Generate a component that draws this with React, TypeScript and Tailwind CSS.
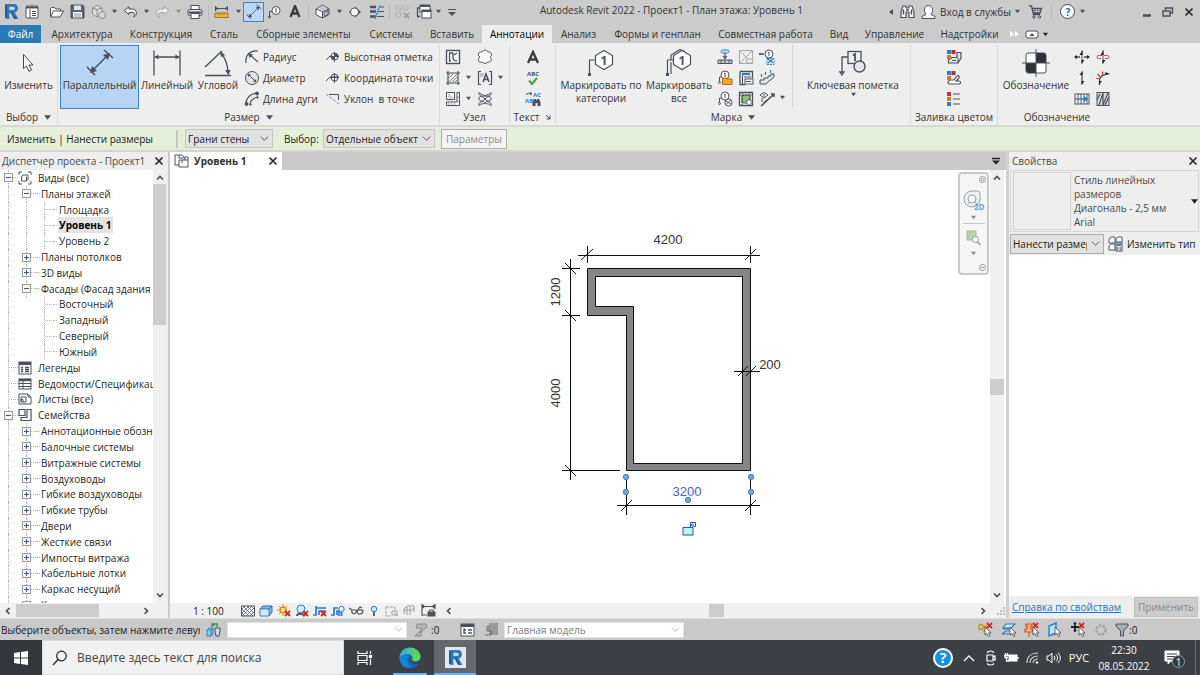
import { useState } from 'react';
import type { ReactNode } from 'react';

const INK = '#4a515c';
const BLUE = '#2b7cc9';

// ---------- small building blocks ----------

const Svg = ({
  w = 16,
  h = 16,
  children,
}: {
  w?: number;
  h?: number;
  children: ReactNode;
}) => (
  <svg
    width={w}
    height={h}
    viewBox={`0 0 ${w} ${h}`}
    fill="none"
    stroke={INK}
    strokeWidth="1"
    className="shrink-0"
    aria-hidden="true"
  >
    {children}
  </svg>
);

const Caret = ({ color = INK, size = 5 }: { color?: string; size?: number }) => (
  <svg width={size} height={size} viewBox="0 0 6 6" className="shrink-0" aria-hidden="true">
    <path d="M0 1h6L3 5z" fill={color} />
  </svg>
);

const Chevron = ({ className = '' }: { className?: string }) => (
  <svg
    width="9"
    height="9"
    viewBox="0 0 10 10"
    fill="none"
    stroke="#555"
    strokeWidth="1.1"
    className={`shrink-0 ${className}`}
    aria-hidden="true"
  >
    <path d="M1 3l4 4 4-4" />
  </svg>
);

const BoldChevron = ({ className = '' }: { className?: string }) => (
  <svg
    width="8"
    height="8"
    viewBox="0 0 8 8"
    fill="none"
    stroke="#505050"
    strokeWidth="1.7"
    className={`shrink-0 ${className}`}
    aria-hidden="true"
  >
    <path d="M1 2.500l3 3 3-3" />
  </svg>
);

const Cross = () => (
  <Svg w={10} h={10}>
    <path d="M1.500 1.500l7 7M8.500 1.500l-7 7" stroke="#2a2a2a" strokeWidth="1.7" />
  </Svg>
);

const Tool = ({
  label,
  className = 'w-[21px]',
  children,
}: {
  label: string;
  className?: string;
  children: ReactNode;
}) => (
  <button aria-label={label} className={`flex shrink-0 items-center justify-center ${className}`}>
    {children}
  </button>
);

const Divider = () => <span className="h-4 w-px shrink-0 bg-[#b9b9b9]" />;

const Select = ({
  label,
  value,
  className,
  chevron = '',
}: {
  label: string;
  value: string;
  className: string;
  chevron?: string;
}) => (
  <div className={`relative flex shrink-0 items-center border pr-4 ${className}`}>
    <select
      aria-label={label}
      className="h-full w-full appearance-none overflow-hidden bg-transparent pl-[2px] text-clip outline-none"
    >
      <option>{value}</option>
    </select>
    <Chevron className={`pointer-events-none absolute right-[3px] ${chevron}`} />
  </div>
);

// ---------- icons ----------

const RevitLogo = ({ size = 16 }: { size?: number }) => (
  <svg width={size} height={size} viewBox="0 0 16 16" className="shrink-0" aria-hidden="true">
    <path d="M2 1l3 1v13l-3-1z" fill="#174a86" />
    <path d="M2 1h8c3 0 4 2 4 4s-1 3.500-3 4l3.500 6h-4L7.500 9.500H6V15H3.500V1z" fill="#2f78bd" />
    <path d="M6 3.500h3.500c2 0 2 3.200 0 3.200H6z" fill="#c9d9ea" />
    <path d="M6 9.500h1.500l3 5.500h1.700L8.500 8.200z" fill="#1d5797" />
  </svg>
);

const Badge = ({ x, y, r = 4 }: { x: number; y: number; r?: number }) => (
  <g>
    <circle cx={x} cy={y} r={r} fill="#fff" />
    <path d={`M${x - 1} ${y - 1}l1-1v4`} />
  </g>
);

const RedX = ({ x, y }: { x: number; y: number }) => (
  <path d={`M${x} ${y}l5 5M${x + 5} ${y}l-5 5`} stroke="#cf2a1e" strokeWidth="1.8" />
);

const Pointer = ({ x, y }: { x: number; y: number }) => (
  <path
    d={`M${x} ${y}v8l2-1.500 1.500 3 1.500-.8-1.500-2.700h2.500z`}
    fill="#fff"
    stroke="#444"
    strokeWidth=".8"
  />
);

const IconWindow = () => (
  <Svg w={14} h={14}>
    <rect x="1" y="1" width="12" height="12" rx="1" fill="#fff" />
    <path d="M1 2.500h12" strokeWidth="2" />
    <path d="M5 4v9M7 6.500h4M7 8.500h4M7 10.500h4" />
  </Svg>
);
const IconOpen = () => (
  <Svg w={16} h={14}>
    <path d="M1.500 12V3.500l1-1h3l1.500 1.500h4.500V6" fill="#f4f4f4" />
    <path d="M1.500 12l3-6h10l-3.500 6z" fill="#fff" />
  </Svg>
);
const IconSave = () => (
  <Svg w={15} h={15}>
    <path d="M1 1h11.500L14 2.500V14H1z" fill="#59626e" />
    <rect x="4" y="1.500" width="7" height="4.500" fill="#dfe3e8" stroke="none" />
    <rect x="3" y="8" width="9" height="5.500" fill="#fff" stroke="none" />
    <path d="M4 10h7M4 12h7" strokeWidth=".7" />
  </Svg>
);
const IconSync = () => (
  <Svg>
    <path d="M1.500 4L6 1.500 11 4v6L6 13l-4.500-3zM1.500 4L6 6l5-2M6 6v7" fill="#e0e0e0" stroke="#8e8e8e" />
    <circle cx="11" cy="11" r="3.500" fill="#d6d6d6" stroke="#8e8e8e" />
  </Svg>
);
const IconUndo = ({ color = INK, flip = false }: { color?: string; flip?: boolean }) => (
  <Svg w={15} h={12}>
    <path
      d="M1 4.500L6 .8v2.200h3.500c5 0 5 7.500 1 8 2-2.500 1-4.500-1.500-4.500H6v2z"
      fill="#f1f1f1"
      stroke={color}
      transform={flip ? 'matrix(-1 0 0 1 15 0)' : undefined}
    />
  </Svg>
);
const IconPrint = () => (
  <Svg>
    <rect x="4" y="1.500" width="8" height="5" fill="#fff" />
    <rect x="1" y="5.500" width="14" height="6" rx="1.500" fill="#d9dce0" />
    <path d="M2 8.500h12" strokeWidth="2" />
    <rect x="4" y="9.500" width="8" height="5" fill="#fff" />
  </Svg>
);
const IconMeasure = () => (
  <Svg w={15} h={14}>
    <path d="M1 3.500h13M1.500 1v5M13.500 1v5M3.500 2L2 3.500 3.500 5M11.500 2L13 3.500 11.500 5" />
    <rect x="1" y="8" width="13" height="4.500" fill="#f3b43c" stroke="#a87415" />
    <path d="M4 8v2M7 8v2M10 8v2" stroke="#a87415" />
  </Svg>
);
const IconDim = ({ s = 16 }: { s?: number }) => (
  <svg width={s} height={s} viewBox="0 0 28 28" fill="none" stroke={INK} strokeWidth="1.500" aria-hidden="true">
    <path d="M5 23L23 5M1 18l8 8M18 1l9 8" />
    <path d="M4 24l2-7 5 5zM24 4l-2 7-5-5z" fill={INK} stroke="none" />
  </svg>
);
const IconTagSmall = () => (
  <Svg w={15} h={14}>
    <path d="M2.500 12V6.500H5" />
    <circle cx="2.500" cy="12" r="1" />
    <Badge x={9} y={5.5} r={4} />
  </Svg>
);
const IconCube = () => (
  <Svg w={15} h={15}>
    <path d="M1 5l6.500-4L14 5v5.500L7.500 14 1 10.500z" fill="#fff" />
    <path d="M1 5l6.500 2.500L14 5M7.500 7.500V14" />
    <path d="M9 8l4-1.500v4L9 12.500z" fill="#c3c8ce" />
    <path d="M2.500 4.500l5-3 5 3-5 2z" fill="#c3c8ce" stroke="none" />
  </Svg>
);
const IconSection = () => (
  <Svg w={14} h={14}>
    <path d="M7 1.500L13 7l-6 5.500z" fill={INK} stroke="none" />
    <circle cx="6.500" cy="7" r="4" fill="#fff" />
    <path d="M1 7h1.500" />
  </Svg>
);
const IconThin = () => (
  <Svg>
    <path d="M1 3h6M1 7.500h6M1 12.500h6" strokeWidth="2.600" />
    <path d="M10 3h5M9 7.500h6M8 12.500h7" />
    <path d="M11 1L6 15" stroke="#3a96e0" strokeWidth="1.300" />
  </Svg>
);
const IconCloseHidden = () => (
  <Svg w={15} h={15}>
    <path d="M1 2h5v4H1zM8 2h5v4H8zM1 9h5v4H1z" stroke="#aaa" strokeDasharray="2 1" />
    <path d="M9 9l5 5M14 9l-5 5" stroke="#999" strokeWidth="1.600" />
  </Svg>
);
const IconSwitch = () => (
  <Svg w={16} h={15}>
    <rect x="4" y="1" width="10" height="7" fill="#fff" />
    <path d="M4 2h10" strokeWidth="2" />
    <rect x="6" y="6" width="9" height="8" fill="#fff" />
    <path d="M6 7h9" strokeWidth="2" />
    <path d="M1.500 4v8.500H4M1 4h3" strokeWidth="1.300" />
  </Svg>
);
const IconBinoculars = () => (
  <Svg w={15} h={15}>
    <path d="M3 2h3v2h3V2h3l2 6v5.500h-5V8H6v5.500H1V8z" fill="#fff" strokeWidth="1.200" />
    <path d="M3.500 5.500v5M11.500 5.500v5M6 6h3" strokeWidth="1.500" />
  </Svg>
);
const IconUser = () => (
  <Svg w={15} h={16}>
    <path d="M1 14.500v-2l4-2c-2.500-3-2-9 2.500-9s5 6 2.500 9l4 2v2z" fill="#fff" />
  </Svg>
);
const IconCart = () => (
  <Svg w={15} h={15}>
    <path d="M1 2h2.500l2 8.500H12M4 4.500h9.500L12 9H5" fill="#e8eaee" strokeWidth="1.300" />
    <path d="M7 5v4M9.500 5v4M12 5v3M4 6.500h9" strokeWidth=".6" />
    <circle cx="6" cy="13" r="1.200" />
    <circle cx="11.500" cy="13" r="1.200" />
  </Svg>
);

const IconCursor = () => (
  <Svg w={14} h={20}>
    <path d="M1.500 1.500v14l3-2.500 2.500 5.500 2.500-1.500-2.500-5h4z" fill="#fff" stroke="#444" />
  </Svg>
);
const IconLinear = () => (
  <Svg w={28} h={28}>
    <path d="M1 1.500v25M27 1.500v25M2 8h24" strokeWidth="1.300" />
    <path d="M1.500 8l4-2.500v5zM26.500 8l-4-2.500v5z" fill={INK} stroke="none" />
  </Svg>
);
const IconAngular = () => (
  <Svg w={28} h={28}>
    <path d="M1 18L18 2M1 26.500h26M17 4c5 6 7 14 7 21" strokeWidth="1.300" />
    <path d="M16 2l5 4-4 2zM24.500 26l-3.500-5h5.500z" fill={INK} stroke="none" />
  </Svg>
);
const IconRadius = () => (
  <Svg>
    <path d="M2 14C1 6 6 1 14 2M14 13L6 6" strokeWidth="1.200" />
    <path d="M4 4l5 1.500L5.500 9z" fill={INK} stroke="none" />
  </Svg>
);
const IconDiameter = () => (
  <Svg>
    <circle cx="8" cy="8" r="6.500" fill="#e2e4e6" />
    <path d="M4 4l8 8" />
    <path d="M3.500 3.500l3.500 1L4.500 7zM12.500 12.500l-3.500-1L11.500 9z" fill={INK} stroke="none" />
  </Svg>
);
const IconArc = () => (
  <Svg>
    <path d="M2 13C2 7 6 3 13 2M6 14c0-4 3-7 8-8" strokeWidth="1.200" />
    <circle cx="2.500" cy="13" r="1.500" fill={INK} />
    <circle cx="13" cy="2.500" r="1.500" fill={INK} />
    <circle cx="6.500" cy="13.500" r=".8" />
    <circle cx="13.500" cy="6.500" r=".8" />
  </Svg>
);
const IconSpot = ({ filled = false }: { filled?: boolean }) => (
  <Svg>
    <path d="M1 11l4-4h9M9.500 3v10" />
    <circle cx="9.500" cy="7.500" r="3.500" fill={filled ? '#fff' : 'none'} />
    {filled && <path d="M9.500 7.500V4a3.500 3.500 0 013.500 3.500zM9.500 7.500V11A3.500 3.500 0 016 7.500z" fill={INK} stroke="none" />}
    <path d="M5 7.500h9M9.500 3v10" />
  </Svg>
);
const IconSlope = () => (
  <Svg>
    <path d="M4 3.500h9.500V9" />
    <path d="M1 3l13 10" stroke="#4a93d8" strokeDasharray="3 1.500" />
  </Svg>
);

const IconDetailLine = () => (
  <Svg>
    <rect x="1.500" y="1.500" width="13" height="13" fill="#fff" strokeWidth="1.400" />
    <path d="M4 4h4M4.500 4v8M4 12h2M8 4v4c0 3 2 4 4 4M12 4L9 6" strokeWidth="1.300" />
  </Svg>
);
const IconRegion = () => (
  <Svg>
    <path d="M1 3h14M1 13h14M3 1v14M13 1v14" strokeWidth="1.200" />
    <path d="M4 8l4-4M4 12l8-8M7 12l5-5M10 12l2-2M4 5l1-1" strokeWidth=".7" />
  </Svg>
);
const IconComponent = () => (
  <Svg>
    <path d="M1.500 1.500h8v7h-8zM12 1.500h2.500v13h-13V11H12z" fill="#fff" />
    <path d="M3 3l5 4M3 12l1 2M6 12l1 2M9 12l1 2M12 5l2 2M12 9l2 2M3 5l3 3" strokeWidth=".6" />
  </Svg>
);
const IconCloud = () => (
  <Svg>
    <path
      d="M3 8C0 7 1 2 5 3c1-2.500 5-2.500 6 0 4-.5 4.500 4 2 5 2.500 2 1 6-2.500 5-1 2-4 2-5 0C1.500 14.500 0 10 3 8z"
      fill="#fff"
    />
  </Svg>
);
const IconGroup = () => (
  <Svg>
    <path d="M4 1.500H1.500v13H4M12 1.500h2.500v13H12" strokeWidth="1.200" />
    <path d="M6 12l3-8 3 8M7 9.500h4" strokeWidth="1.500" />
    <path d="M3 4h4M3 6h3" strokeWidth=".6" />
  </Svg>
);
const IconInsulation = () => (
  <Svg>
    <path d="M2 1.500c1 2.500 4 1.500 6 3.500 2-2 5-1 6-3.500M2 1.500C1 5 5 4.500 8 8c3-3.500 7-3 6-6.500M2 8c-1-3 4-3 6-3 2 0 7 0 6 3M2 8c0 3 4 1 6 4 2-3 6-1 6-4M2 14.500c-1-4 4-3.500 6-6.500 2 3 7 2.500 6 6.500M2 14.500c2-2.500 4-1 6-2.500 2 1.500 4 0 6 2.500" />
  </Svg>
);
const IconSpell = () => (
  <svg width="16" height="16" viewBox="0 0 16 16" aria-hidden="true">
    <text x="8" y="6" textAnchor="middle" fontSize="6" fontWeight="700" fill={INK} fontFamily="Open Sans, sans-serif">
      ABC
    </text>
    <path d="M4 10.500l3 3.500 5-6" fill="none" stroke="#3aa63a" strokeWidth="2" />
  </svg>
);
const IconFind = () => (
  <svg width="16" height="16" viewBox="0 0 16 16" aria-hidden="true">
    <path d="M1 4c1-2 3-2 5-1.500M5 1l2 1.800L5 4" fill="none" stroke={INK} />
    <text x="8" y="6" fontSize="6" fontWeight="700" fill={BLUE} fontFamily="Open Sans, sans-serif">
      AC
    </text>
    <text x="0" y="12" fontSize="6" fontWeight="700" fill={BLUE} fontFamily="Open Sans, sans-serif">
      AB
    </text>
    <path d="M9 8h2v1h1V8h2l1.500 3v4h-3v-3h-2v3H7.500v-4z" fill={INK} />
  </svg>
);

const Hexagon = ({ double = false }: { double?: boolean }) => (
  <svg width="28" height="28" viewBox="0 0 28 28" fill="none" stroke={INK} strokeWidth="1.200" aria-hidden="true">
    <path d="M9 11H2.500v13" />
    <path d="M1 24h3v3H1z" fill={INK} stroke="none" />
    {double && <path d="M6 13v12M6 11V6l9-5.500 5 2" />}
    <path d="M17 1.500l8.500 5v9L17 20.500 8.500 15.500v-9z" fill="#fff" />
    <text
      x="17"
      y="15.500"
      textAnchor="middle"
      fontSize="12"
      fontWeight="700"
      fill={INK}
      stroke="none"
      fontFamily="Open Sans, sans-serif"
    >
      1
    </text>
  </svg>
);

const tagIcons: { name: string; icon: ReactNode }[] = [
  {
    name: 'Марка балки',
    icon: (
      <Svg>
        <rect x="4" y="1" width="8" height="3" rx="1.500" fill="#cfe6fb" stroke={BLUE} />
        <path d="M8 4v5M6 7l2 2.500L10 7" strokeWidth="1.200" />
        <path d="M1 11h14v3.500H1z" fill="#c8ccd0" />
        <path d="M4 11v3M8 11v3M12 11v3" />
      </Svg>
    ),
  },
  {
    name: 'Марка зоны',
    icon: (
      <Svg>
        <path d="M1.500 1.500h13v13h-13zM1.500 1.500l13 13M14.500 1.500l-13 13" stroke="#a9a9a9" />
        <rect x="8" y="10" width="7" height="4" rx="2" fill="#eee" stroke="#a9a9a9" />
      </Svg>
    ),
  },
  {
    name: 'Многокатегорийная',
    icon: (
      <Svg>
        <path d="M0 5h5M1 4v2" strokeWidth="1.300" />
        <Badge x={10} y={5} r={4} />
        <path d="M8 9.500h7v6H8z" stroke={BLUE} strokeDasharray="2 1" />
        <path d="M9 10l5 4M14 10l-5 4" stroke={BLUE} strokeWidth="1.300" />
      </Svg>
    ),
  },
  {
    name: 'Марка материала',
    icon: (
      <Svg>
        <path d="M2.500 12V7H4" />
        <circle cx="2.500" cy="12.500" r="1" />
        <Badge x={8} y={5} r={4} />
        <path d="M5.500 8h3l1 1h5.500v5.500H5.500z" fill="#f3a62b" stroke="#a86c0c" />
      </Svg>
    ),
  },
  {
    name: 'Марка помещения',
    icon: (
      <Svg>
        <path d="M2 1.500h12.500V8M2 1.500v13h5" strokeWidth="1.300" />
        <path d="M4 3h8v2H4z" fill={BLUE} stroke="none" />
        <path d="M4.500 5v9" />
        <rect x="7" y="9" width="8" height="5" fill="#fff" />
        <path d="M6 7h7M8 11.500h5" />
      </Svg>
    ),
  },
  {
    name: 'Номер проступи',
    icon: (
      <Svg>
        <path d="M1 14v-4h4V8h4V6h3V4h3v3l-2 2-3 2-3 3z" fill="#e4e7ea" />
        <path d="M2.500 7V4M6.500 5V2M11.500 3V0" stroke={BLUE} strokeWidth="1.200" />
      </Svg>
    ),
  },
  {
    name: 'Марка вида',
    icon: (
      <Svg>
        <path d="M2.500 12V7H4" />
        <circle cx="2.500" cy="12.500" r="1" />
        <Badge x={8} y={5} r={4} />
        <circle cx="11.500" cy="11.500" r="3.500" fill="#fff" />
        <path d="M9 10l5 3M9.500 13l4-3.500" />
      </Svg>
    ),
  },
  {
    name: 'Марка пространства',
    icon: (
      <Svg>
        <path d="M1.500 1.500h13v13h-13z" fill="#fff" strokeWidth="1.300" />
        <path d="M4 4h8v8H4z" fill="#8cc373" />
        <path d="M4 1v14M12 1v8M1 4h14" strokeDasharray="2 1" />
        <path d="M11 8l3.500 3-3.500 3.500L8 11.500z" fill="#fff" />
      </Svg>
    ),
  },
  {
    name: 'Армирование',
    icon: (
      <Svg>
        <path d="M1 4l4-2.500L9 4 5 7z" fill="#fff" />
        <path d="M2 15L14 4M12 3h3v3M5 12l3-3" strokeWidth="1.600" />
        <path d="M5 3v3M3 7v4" />
      </Svg>
    ),
  },
];

const IconKeynote = () => (
  <Svg w={28} h={28}>
    <path d="M9 8H3v16M1 23h4l-2 3z" strokeWidth="1.300" />
    <rect x="9" y="2.500" width="13" height="12" strokeWidth="1.300" />
    <path d="M14 6.500l2-1.500v7" strokeWidth="1.800" />
    <circle cx="20.500" cy="17.500" r="5.500" fill="#e4e6e9" strokeWidth="1.400" />
  </Svg>
);

const Swatches = () => (
  <g stroke="none">
    <rect x="1" y="1" width="4" height="4" fill={BLUE} />
    <rect x="5.500" y="1" width="4" height="4" fill="#b52d3a" />
    <rect x="1" y="6" width="4" height="4" fill="#e0761a" />
  </g>
);
const IconDuctLegend = () => (
  <Svg>
    <path d="M11 3.500h4V9l-3 5H2.500V11L6 8.500h5z" fill="#e4e6e9" strokeWidth="1.200" />
    <path d="M6 11.500h4M12 14V9" />
    <Swatches />
  </Svg>
);
const IconPipeLegend = () => (
  <Svg>
    <path d="M3 14c-2-1-.5-4 2-4h3l3-4c2-1 3 1 1.500 2.500L10 11h3c2 0 2 3 0 3z" fill="#fff" strokeWidth="1.200" />
    <Swatches />
  </Svg>
);
const IconColorLegend = () => (
  <Svg>
    <rect x="1" y="1" width="4" height="4" fill="#c8322b" stroke="none" />
    <rect x="1" y="6" width="4" height="4" fill="#e0761a" stroke="none" />
    <rect x="1" y="11" width="4" height="4" fill={BLUE} stroke="none" />
    <path d="M7 3h7M7 8h7M7 13h7" strokeWidth="1.200" />
  </Svg>
);
const IconSymbol = () => (
  <Svg w={28} h={28}>
    <rect x="4" y="4" width="20" height="20" rx="2" fill="#fff" />
    <path d="M14 4h8l2 2v8H14zM4 14h10v10H6l-2-2z" fill="#2e3237" stroke="none" />
    <path d="M14 0v28M0 14h28" />
  </Svg>
);

const symbolIcons: { name: string; icon: ReactNode }[] = [
  {
    name: 'Направление раскладки',
    icon: (
      <Svg>
        <path d="M8 1.500v13" />
        <path d="M8.500 1v5H5.500zM7.500 15v-4h3z" fill="#222" stroke="none" />
        <path d="M1 8h5M10 8h5" strokeWidth="1.300" />
        <path d="M0 8l3-2v4zM16 8l-3-2v4z" fill="#222" stroke="none" />
      </Svg>
    ),
  },
  {
    name: 'Ось соединения',
    icon: (
      <Svg>
        <path d="M8 1.500v13" />
        <path d="M8.500 1v5H5.500zM7.500 15v-4h3z" fill="#222" stroke="none" />
        <path d="M7 6.500H3.500a1.500 1.500 0 000 3H6M9 6.500h3.500a1.500 1.500 0 010 3H10" stroke="#d84545" />
      </Svg>
    ),
  },
  {
    name: 'Траектория',
    icon: (
      <Svg>
        <path d="M8 1.500v13" strokeWidth="1.300" />
        <path d="M8.500 1v4H5.500zM7.500 15v-4h3z" fill="#222" stroke="none" />
      </Svg>
    ),
  },
  {
    name: 'Изгиб',
    icon: (
      <Svg>
        <path d="M4.500 15V9.500c1-3 3-5 8-5.500" strokeWidth="1.300" />
        <path d="M10 2l5 2-4 1zM4 15v-4h3z" fill="#222" stroke="none" />
        <path d="M1 8.500h3.500M2.500 4l3 3M7 1.500l1 3.500" stroke="#d33" strokeWidth="1.200" />
      </Svg>
    ),
  },
  {
    name: 'Область',
    icon: (
      <Svg>
        <rect x="1" y="3" width="14" height="10" fill="#fff" />
        <path d="M4 3v10M7 3v10M10 3v10M13 3v10" />
        <path d="M1 8h11M10 6l3 2-3 2" stroke={BLUE} strokeWidth="1.600" />
      </Svg>
    ),
  },
  {
    name: 'Армирующая сетка',
    icon: (
      <Svg>
        <rect x="2" y="1.500" width="12" height="13" fill="#d9dcdf" />
        <path d="M4 14L8 2v12l5-12M2 9l3-6M10 14l4-8" strokeWidth="1.200" />
      </Svg>
    ),
  },
];

// ---------- title bar and tabs ----------

const TitleBar = () => (
  <header className="flex h-[25px] shrink-0 items-center bg-[#cbcbcb] pb-1">
    <div className="flex w-[460px] shrink-0 items-center pt-[2px]">
      <Tool label="Revit" className="w-[22px]">
        <RevitLogo size={17} />
      </Tool>
      <Tool label="Главная" className="mr-1 w-5">
        <IconWindow />
      </Tool>
      <Tool label="Открыть">
        <IconOpen />
      </Tool>
      <Tool label="Сохранить">
        <IconSave />
      </Tool>
      <Tool label="Синхронизация">
        <IconSync />
      </Tool>
      <Tool label="Параметры синхронизации" className="w-[11px]">
        <Caret />
      </Tool>
      <Tool label="Отменить">
        <IconUndo />
      </Tool>
      <Tool label="Список отмены" className="w-[11px]">
        <Caret />
      </Tool>
      <Tool label="Повторить">
        <IconUndo color="#a3a3a3" flip />
      </Tool>
      <Tool label="Список повтора" className="w-[11px]">
        <Caret color="#8b8b8b" />
      </Tool>
      <Tool label="Печать">
        <IconPrint />
      </Tool>
      <span className="w-[3px] shrink-0" />
      <Divider />
      <Tool label="Измерить" className="w-6">
        <IconMeasure />
      </Tool>
      <Tool label="Список измерений" className="w-[10px]">
        <Caret />
      </Tool>
      <button
        aria-label="Параллельный размер"
        className="flex h-5 w-[21px] shrink-0 items-center justify-center border border-[#3c84d2] bg-[#bcd8f3]"
      >
        <IconDim />
      </button>
      <Tool label="Марка">
        <IconTagSmall />
      </Tool>
      <Tool label="Текст" className="w-5">
        <Svg w={12} h={13}>
          <path d="M1.500 12L6 1l4.500 11M3 8.500h6" stroke="#3a3a3a" strokeWidth="2.300" />
        </Svg>
      </Tool>
      <span className="w-[3px] shrink-0" />
      <Divider />
      <Tool label="3D вид" className="w-[26px]">
        <IconCube />
      </Tool>
      <Tool label="Список видов" className="w-[9px]">
        <Caret />
      </Tool>
      <Tool label="Разрез">
        <IconSection />
      </Tool>
      <Tool label="Тонкие линии" className="w-6">
        <IconThin />
      </Tool>
      <Divider />
      <Tool label="Закрыть неактивные" className="w-6">
        <IconCloseHidden />
      </Tool>
      <Tool label="Переключить окна" className="w-5">
        <IconSwitch />
      </Tool>
      <Tool label="Список окон" className="w-2">
        <Caret />
      </Tool>
      <Tool label="Настройка панели" className="w-5">
        <Svg w={8} h={8}>
          <path d="M0 1.500h8" />
          <path d="M0 4h8L4 8z" fill={INK} stroke="none" />
        </Svg>
      </Tool>
    </div>
    <h1 className="flex-1 pb-px text-center whitespace-nowrap">
      Autodesk Revit 2022 - Проект1 - План этажа: Уровень 1
    </h1>
    <div className="flex w-[317px] shrink-0 items-center pt-[2px]">
      <Tool label="Свернуть поиск" className="w-[14px]">
        <Svg w={5} h={6}>
          <path d="M5 0v6L1 3z" fill={INK} stroke="none" />
        </Svg>
      </Tool>
      <Tool label="Поиск">
        <IconBinoculars />
      </Tool>
      <button className="ml-[3px] flex shrink-0 items-center gap-1">
        <IconUser />
        <span className="whitespace-nowrap">Вход в службы</span>
        <Caret />
      </button>
      <Tool label="Магазин" className="ml-[3px] w-[26px]">
        <IconCart />
      </Tool>
      <span className="w-[2px] shrink-0" />
      <Divider />
      <Tool label="Справка" className="ml-1 w-6">
        <span className="flex size-[15px] items-center justify-center rounded-full border border-[#454b54] bg-white leading-none font-bold text-[#2064c8]">
          ?
        </span>
      </Tool>
      <Caret />
      <span className="flex-1" />
      <Tool label="Свернуть">
        <Svg w={8} h={12}>
          <path d="M0 9.500h8" strokeWidth="2.500" />
        </Svg>
      </Tool>
      <Tool label="Восстановить">
        <Svg w={12} h={10}>
          <path d="M3.500 3V1h7v5H8.500M1 4h7v5H1z" strokeWidth="1.400" />
        </Svg>
      </Tool>
      <Tool label="Закрыть" className="mr-px w-[21px]">
        <Cross />
      </Tool>
    </div>
  </header>
);

const tabs = [
  { name: 'Архитектура', width: 'w-[78px]' },
  { name: 'Конструкция', width: 'w-20' },
  { name: 'Сталь', width: 'w-[46px]' },
  { name: 'Сборные элементы', width: 'w-[113px]' },
  { name: 'Системы', width: 'w-[62px]' },
  { name: 'Вставить', width: 'w-[60px]' },
  { name: 'Аннотации', width: 'w-[70px]' },
  { name: 'Анализ', width: 'w-[53px]' },
  { name: 'Формы и генплан', width: 'w-[105px]' },
  { name: 'Совместная работа', width: 'w-[111px]' },
  { name: 'Вид', width: 'w-9' },
  { name: 'Управление', width: 'w-[75px]' },
  { name: 'Надстройки', width: 'w-[75px]' },
];

const RibbonTabs = ({ active, onSelect }: { active: string; onSelect: (name: string) => void }) => (
  <nav className="flex h-[18px] shrink-0 items-stretch bg-[#cbcbcb]">
    <button className="mr-[2px] w-[41px] bg-[#2b7bb4] text-white">Файл</button>
    {tabs.map((tab) => (
      <button
        key={tab.name}
        onClick={() => onSelect(tab.name)}
        className={`flex shrink-0 items-center justify-center whitespace-nowrap ${tab.width} ${
          tab.name === active ? 'bg-[#eeeeee] text-black' : ''
        }`}
      >
        {tab.name}
      </button>
    ))}
    <Tool label="Ещё вкладки" className="w-[14px]">
      <Svg w={9} h={8}>
        <path d="M0 1l4 3-4 3zM5 1l4 3-4 3z" fill="#fff" stroke="none" />
      </Svg>
    </Tool>
    <Tool label="Свернуть ленту" className="ml-1 w-[22px] gap-1">
      <Svg w={14} h={9}>
        <rect x="1" y="1" width="12" height="7" rx="2" fill="#fff" />
        <path d="M4.500 6h5L7 3z" fill={INK} stroke="none" />
      </Svg>
      <Caret color="#222" />
    </Tool>
  </nav>
);

// ---------- ribbon ----------

const Panel = ({
  title,
  className,
  caret = false,
  extra,
  children,
}: {
  title: string;
  className: string;
  caret?: boolean;
  extra?: ReactNode;
  children: ReactNode;
}) => (
  <section className={`flex shrink-0 flex-col border-r border-[#dcdcdc] ${className}`}>
    <div className="flex h-[64px] items-start">{children}</div>
    <div className="flex flex-1 items-center justify-center gap-[6px] whitespace-nowrap">
      {title}
      {caret && <Caret size={7} />}
      {extra}
    </div>
  </section>
);

const BigTool = ({
  className,
  icon,
  active = false,
  children,
}: {
  className: string;
  icon: ReactNode;
  active?: boolean;
  children: ReactNode;
}) => (
  <button
    className={`flex h-[64px] shrink-0 flex-col items-center border pt-[3px] leading-[13px] whitespace-nowrap ${className} ${
      active ? 'border-[#3c84d2] bg-[#b7d5f2]' : 'border-transparent'
    }`}
  >
    <span className="mb-[2px] flex h-7 items-center">{icon}</span>
    {children}
  </button>
);

const RowTool = ({ icon, children }: { icon: ReactNode; children: ReactNode }) => (
  <button className="flex h-[21px] items-center gap-[3px] whitespace-nowrap">
    {icon}
    {children}
  </button>
);

const Ribbon = () => (
  <div className="flex h-[84px] shrink-0 overflow-hidden border-b-2 border-[#d8d8d8] bg-[#eeeeee] pt-[2px]">
    <Panel title="Выбор" caret className="w-[58px]">
      <BigTool className="w-[57px]" icon={<IconCursor />}>
        Изменить
      </BigTool>
    </Panel>
    <Panel title="Размер" caret className="w-[382px]">
      <BigTool className="ml-[2px] w-[79px]" active icon={<IconDim s={28} />}>
        Параллельный
      </BigTool>
      <BigTool className="w-[56px]" icon={<IconLinear />}>
        Линейный
      </BigTool>
      <BigTool className="w-[46px]" icon={<IconAngular />}>
        Угловой
      </BigTool>
      <div className="ml-[3px] w-[81px] pt-px">
        <RowTool icon={<IconRadius />}>Радиус</RowTool>
        <RowTool icon={<IconDiameter />}>Диаметр</RowTool>
        <RowTool icon={<IconArc />}>Длина дуги</RowTool>
      </div>
      <div className="pt-px">
        <RowTool icon={<IconSpot filled />}>Высотная отметка</RowTool>
        <RowTool icon={<IconSpot />}>Координата точки</RowTool>
        <RowTool icon={<IconSlope />}>Уклон&nbsp; в точке</RowTool>
      </div>
    </Panel>
    <Panel title="Узел" className="w-[70px]">
      <div className="grid grid-cols-[32px_32px] pt-px pl-[5px]">
        <Tool label="Линия детализации" className="h-[21px] w-4">
          <IconDetailLine />
        </Tool>
        <Tool label="Пометочное облако" className="h-[21px] w-4">
          <IconCloud />
        </Tool>
        <Tool label="Область" className="h-[21px] w-[26px] gap-[5px]">
          <IconRegion />
          <Caret />
        </Tool>
        <Tool label="Группа узлов" className="h-[21px] w-[26px] gap-[5px]">
          <IconGroup />
          <Caret />
        </Tool>
        <Tool label="Компонент" className="h-[21px] w-[26px] gap-[5px]">
          <IconComponent />
          <Caret />
        </Tool>
        <Tool label="Изоляция" className="h-[21px] w-4">
          <IconInsulation />
        </Tool>
      </div>
    </Panel>
    <Panel
      title="Текст"
      className="w-[46px]"
      extra={
        <Svg w={6} h={6}>
          <path d="M1 1l4 4M5 1.500V5H1.500" />
        </Svg>
      }
    >
      <div className="flex flex-1 flex-col items-center pt-px">
        <Tool label="Текст" className="h-[21px] w-5">
          <Svg w={14} h={14}>
            <path d="M2 13L7 2l5 11M3.500 9.500h7" stroke="#3a3a3a" strokeWidth="2.300" />
          </Svg>
        </Tool>
        <Tool label="Орфография" className="h-[21px] w-5">
          <IconSpell />
        </Tool>
        <Tool label="Найти и заменить" className="h-[21px] w-5">
          <IconFind />
        </Tool>
      </div>
    </Panel>
    <Panel title="Марка" caret className="w-[355px]">
      <BigTool className="w-[90px]" icon={<Hexagon />}>
        Маркировать по
        <br />
        категории
      </BigTool>
      <BigTool className="w-[66px]" icon={<Hexagon double />}>
        Маркировать
        <br />
        все
      </BigTool>
      <div className="ml-[5px] grid grid-cols-[21px_21px_21px] pt-px">
        {tagIcons.map((item) => (
          <Tool key={item.name} label={item.name} className="h-[21px] w-4">
            {item.icon}
          </Tool>
        ))}
      </div>
      <span className="flex h-[63px] w-3 items-end pb-2">
        <Caret />
      </span>
      <span className="h-[62px] w-px bg-[#d6d6d6]" />
      <BigTool className="ml-[9px] w-[102px]" icon={<IconKeynote />}>
        Ключевая пометка
        <Caret />
      </BigTool>
    </Panel>
    <Panel title="Заливка цветом" className="w-[87px]">
      <div className="flex flex-1 flex-col items-center pt-px">
        <Tool label="Легенда воздуховодов" className="h-[21px] w-5">
          <IconDuctLegend />
        </Tool>
        <Tool label="Легенда трубопроводов" className="h-[21px] w-5">
          <IconPipeLegend />
        </Tool>
        <Tool label="Цветовая легенда" className="h-[21px] w-5">
          <IconColorLegend />
        </Tool>
      </div>
    </Panel>
    <section className="flex w-[118px] shrink-0 flex-col">
      <div className="flex h-[64px] items-start">
        <BigTool className="w-[76px]" icon={<IconSymbol />}>
          Обозначение
        </BigTool>
        <div className="grid grid-cols-[21px_21px] pt-px">
          {symbolIcons.map((item) => (
            <Tool key={item.name} label={item.name} className="h-[21px] w-4">
              {item.icon}
            </Tool>
          ))}
        </div>
      </div>
      <div className="flex flex-1 items-center justify-center">Обозначение</div>
    </section>
  </div>
);

const OptionsBar = () => (
  <div className="flex h-[25px] shrink-0 items-center border-b-2 border-[#d3d3cf] bg-[#e5efd8] text-[#1a1a1a]">
    <span className="w-[176px] shrink-0 pl-[7px] whitespace-nowrap">Изменить | Нанести размеры</span>
    <span className="h-[18px] w-[2px] bg-[#c4c9bd]" />
    <Select label="Грани" value="Грани стены" className="ml-[7px] h-[19px] w-[88px] border-[#c5c5c5] bg-[#e1e1e1]" />
    <span className="w-[50px] shrink-0 pl-[11px]">Выбор:</span>
    <Select label="Выбор" value="Отдельные объекты" className="h-[19px] w-[112px] border-[#c5c5c5] bg-[#e1e1e1]" />
    <button className="ml-[6px] h-5 w-[66px] border border-[#adadad] bg-[#f4f4f4] text-[#8a8a8a]">Параметры</button>
  </div>
);

// ---------- project browser ----------

type TreeRow = {
  text: string;
  level: 0 | 1 | 2;
  toggle?: '+' | '-';
  icon?: ReactNode;
  bold?: boolean;
  // vertical guide of the middle column runs through the row
  mid?: boolean;
};

const tree: TreeRow[] = [
  {
    text: 'Виды (все)',
    level: 0,
    toggle: '-',
    icon: (
      <Svg w={14} h={14}>
        <path d="M1 4V1h3M10 1h3v3M1 10v3h3M10 13h3v-3" />
        <path d="M3.500 6l1.500-2h5v4.500L8.500 10h-5zM8.500 10V6" fill="#fff" />
      </Svg>
    ),
  },
  { text: 'Планы этажей', level: 1, toggle: '-' },
  { text: 'Площадка', level: 2, mid: true },
  { text: 'Уровень 1', level: 2, mid: true, bold: true },
  { text: 'Уровень 2', level: 2, mid: true },
  { text: 'Планы потолков', level: 1, toggle: '+' },
  { text: '3D виды', level: 1, toggle: '+' },
  { text: 'Фасады (Фасад здания', level: 1, toggle: '-' },
  { text: 'Восточный', level: 2 },
  { text: 'Западный', level: 2 },
  { text: 'Северный', level: 2 },
  { text: 'Южный', level: 2 },
  {
    text: 'Легенды',
    level: 0,
    icon: (
      <Svg w={14} h={14}>
        <rect x="1" y="1" width="12" height="12" fill="#fff" />
        <path d="M1 2.500h12" strokeWidth="3" />
        <path d="M3 6.500h2M3 8.500h2M3 10.500h2M7 6.500h4M7 8.500h4M7 10.500h4" strokeWidth="1.400" />
      </Svg>
    ),
  },
  {
    text: 'Ведомости/Спецификац',
    level: 0,
    icon: (
      <Svg w={14} h={12}>
        <rect x="1" y="1" width="12" height="10" fill="#fff" />
        <path d="M1 2h12" strokeWidth="2.500" />
        <path d="M1 5.500h12M1 8.500h12M5 3v8" />
      </Svg>
    ),
  },
  {
    text: 'Листы (все)',
    level: 0,
    icon: (
      <Svg w={14} h={12}>
        <path d="M1 1h9l3 3v7H1z" fill="#fff" />
        <path d="M3 8V4h5v5H3V6.500h2V9M10 1v3h3" />
      </Svg>
    ),
  },
  {
    text: 'Семейства',
    level: 0,
    toggle: '-',
    icon: (
      <Svg w={14} h={14}>
        <path d="M1 1.500h6v6H1zM9 1.500h4v11H3V9.500h6z" fill="#fff" strokeWidth="1.200" />
      </Svg>
    ),
  },
  { text: 'Аннотационные обозн', level: 1, toggle: '+' },
  { text: 'Балочные системы', level: 1, toggle: '+' },
  { text: 'Витражные системы', level: 1, toggle: '+' },
  { text: 'Воздуховоды', level: 1, toggle: '+' },
  { text: 'Гибкие воздуховоды', level: 1, toggle: '+' },
  { text: 'Гибкие трубы', level: 1, toggle: '+' },
  { text: 'Двери', level: 1, toggle: '+' },
  { text: 'Жесткие связи', level: 1, toggle: '+' },
  { text: 'Импосты витража', level: 1, toggle: '+' },
  { text: 'Кабельные лотки', level: 1, toggle: '+' },
  { text: 'Каркас несущий', level: 1, toggle: '+' },
  { text: 'Колонны', level: 1, toggle: '+' },
];

const Guide = ({ line = true, branch = false, toggle }: { line?: boolean; branch?: boolean; toggle?: '+' | '-' }) => (
  <span className="relative flex h-full w-[18px] shrink-0 items-center">
    <span className={`h-full w-[9px] ${line ? 'border-r border-dotted border-[#b5b5b5]' : ''}`} />
    {branch && <span className="w-[9px] border-t border-dotted border-[#b5b5b5]" />}
    {toggle && (
      <svg width="9" height="9" viewBox="0 0 9 9" className="absolute left-1" aria-hidden="true">
        <rect x=".5" y=".5" width="8" height="8" fill="#f7f7f7" stroke="#9a9a9a" />
        <path d={toggle === '+' ? 'M2 4.500h5M4.500 2v5' : 'M2 4.500h5'} stroke="#3b58a5" />
      </svg>
    )}
  </span>
);

const TreeItem = ({ row }: { row: TreeRow }) => (
  <li className="flex min-h-0 items-center whitespace-nowrap">
    {row.level === 0 && (
      <>
        <Guide branch toggle={row.toggle} />
        <span className="mr-[2px] flex w-[17px] shrink-0 justify-start">{row.icon}</span>
      </>
    )}
    {row.level === 1 && (
      <>
        <Guide />
        <Guide branch toggle={row.toggle} />
        <span className="w-1 shrink-0 border-t border-dotted border-[#b5b5b5]" />
      </>
    )}
    {row.level === 2 && (
      <>
        <Guide />
        <Guide line={row.mid ?? false} />
        <Guide branch />
        <span className="mr-px w-[3px] shrink-0 border-t border-dotted border-[#b5b5b5]" />
      </>
    )}
    <span className={row.bold ? 'bg-[#e3e3e3] pr-[2px] pl-px leading-4 font-bold text-black' : 'pl-px'}>
      {row.text}
    </span>
  </li>
);

const ProjectBrowser = () => (
  <aside className="flex w-[170px] shrink-0 flex-col border-r-2 border-[#c9c9c9] bg-[#eeeeee]">
    <div className="flex h-[18px] shrink-0 items-center justify-between pr-1 pl-[2px] text-[#4a4a4a]">
      <h2 className="whitespace-nowrap">Диспетчер проекта - Проект1</h2>
      <button aria-label="Закрыть диспетчер">
        <Cross />
      </button>
    </div>
    <div className="flex min-h-0 flex-1">
      <div className="min-w-0 flex-1 overflow-hidden bg-white text-[#1f1f1f]">
        <ul className="grid h-[443px] auto-rows-fr">
          {tree.map((row) => (
            <TreeItem key={row.text} row={row} />
          ))}
        </ul>
      </div>
      <div className="mr-[2px] flex w-[13px] flex-col items-center bg-[#f0f0f0] py-1">
        <BoldChevron className="rotate-180" />
        <span className="mt-[2px] h-[141px] w-full bg-[#cdcdcd]" />
        <span className="flex-1" />
        <BoldChevron />
      </div>
    </div>
    <div className="flex h-[15px] shrink-0 items-center bg-[#f0f0f0] pl-1">
      <BoldChevron className="rotate-90" />
      <span className="ml-1 h-[13px] w-[83px] bg-[#cdcdcd]" />
      <span className="flex-1" />
      <BoldChevron className="mr-[18px] -rotate-90" />
    </div>
  </aside>
);

// ---------- drawing area ----------

const Grip = ({ x, y }: { x: number; y: number }) => (
  <circle cx={x} cy={y} r="2.700" fill="#6ea6e4" stroke="#5a7ba6" />
);

const FloorPlan = () => (
  <svg
    width="260"
    height="320"
    viewBox="540 225 260 320"
    fill="none"
    stroke="#111"
    className="absolute top-[55px] left-[370px]"
    fontFamily="Liberation Sans, Arial, sans-serif"
    fontSize="13"
  >
    {/* walls */}
    <path
      d="M587.500 268.500h163v202h-124v-155h-39zM595.500 276.500v30h38v157h109v-187z"
      fill="#868686"
      fillRule="evenodd"
    />
    {/* top dimension */}
    <path d="M578 255.500h182M587.500 246v17M750.500 246v17" />
    <path d="M581 260l12-11M745 260l11-11" />
    {/* left dimensions */}
    <path d="M570.500 259v221M562 268.500h18M562 315.500h18M562 470.500h58" />
    <path d="M565 263l11 11M565 310l11 11M565 465l11 11" />
    {/* wall thickness */}
    <path d="M734 371.500h26M738 376l10-10M746 376l10-10" />
    {/* bottom dimension */}
    <path d="M617 505.500h143M626.500 477v38M750.500 477v38" />
    <path d="M621 511l11-11M745 511l11-11" />
    <Grip x={626} y={477} />
    <Grip x={626} y={492} />
    <Grip x={751} y={477} />
    <Grip x={751} y={492} />
    <g fill="#333" stroke="none" textAnchor="middle">
      <text x="668" y="244">4200</text>
      <text x="770" y="369">200</text>
      <text transform="rotate(-90 560 292)" x="560" y="292">1200</text>
      <text transform="rotate(-90 560 393)" x="560" y="393">4000</text>
      <text x="687" y="496" fill="#3a63d0">3200</text>
    </g>
    <Grip x={688} y={500} />
    {/* unlocked padlock */}
    <path d="M683 527.500h10v7.500h-10z" fill="#c2f0f7" stroke="#1f55c0" />
    <path d="M690.500 527v-4.500h5v4h-2" stroke="#1f55c0" />
    <circle cx="692.500" cy="525" r="1" stroke="#1f55c0" />
  </svg>
);

const NavigationBar = () => (
  <div className="absolute top-[2px] right-0 flex h-[103px] w-[31px] flex-col items-center rounded-[4px] border-2 border-[#c9c9c9] bg-[#f5f5f5] py-px">
    <button aria-label="Закрыть панель" className="self-end">
      <Svg w={9} h={9}>
        <circle cx="4.500" cy="4.500" r="3" stroke="#999" />
        <path d="M3 3l3 3M6 3L3 6" stroke="#999" />
      </Svg>
    </button>
    <button aria-label="Штурвал 2D" className="mt-[6px] ml-[2px]">
      <svg width="23" height="22" viewBox="0 0 23 22" fill="none" stroke="#9aa0a8" aria-hidden="true">
        <path d="M1 9a8 8 0 018-8h5q3 0 3 3v5a8 8 0 01-16 0z" fill="#edf0f2" />
        <circle cx="9" cy="9" r="4" fill="#fff" />
        <path d="M12 12l3 3M5 14l2-2" />
        <text x="11" y="20" fontSize="8" fontWeight="700" fill="#6f9bcd" stroke="none" fontFamily="Open Sans, sans-serif">
          2D
        </text>
      </svg>
    </button>
    <span className="mt-[3px] flex">
      <Caret color="#888" />
    </span>
    <span className="mt-[3px] h-px w-[22px] bg-[#c6c6c6]" />
    <button aria-label="Масштаб" className="mt-[6px]">
      <Svg w={16} h={16}>
        <rect x="1" y="1" width="9" height="9" fill="#b5d3a6" stroke="#a4c096" />
        <circle cx="9.500" cy="9.500" r="3" fill="#fff" stroke="#999" />
        <path d="M11.500 12l3 3" stroke="#999" strokeWidth="1.600" />
      </Svg>
    </button>
    <span className="mt-[5px] flex">
      <Caret color="#888" />
    </span>
    <span className="flex-1" />
    <span className="self-end">
      <Svg w={9} h={9}>
        <circle cx="4.500" cy="4.500" r="3" stroke="#999" />
        <path d="M3 4.500h3" stroke="#999" />
      </Svg>
    </span>
  </div>
);

const viewControls: { name: string; icon: ReactNode }[] = [
  {
    name: 'Детализация',
    icon: (
      <Svg w={14} h={12}>
        <rect x=".5" y="1" width="13" height="10" fill="#fff" />
        <path d="M1 4l3-3M1 8l7-7M1 11L11 1M5 11l8-8M9 11l4-4M1 8l3 3M1 4l7 7M2 1l10 10M6 1l7 7M10 1l3 3" strokeWidth=".7" />
      </Svg>
    ),
  },
  {
    name: 'Визуальный стиль',
    icon: (
      <Svg w={14} h={12}>
        <path d="M1 4l3-3h9v6l-3 4H1z" fill="#7db9ea" stroke="#2e6fa8" />
        <path d="M1 4h9v7M10 4l3-3" fill="none" stroke="#2e6fa8" />
        <path d="M1.500 4.500h8v6h-8z" fill="#d3e8f8" stroke="none" />
      </Svg>
    ),
  },
  {
    name: 'Солнце',
    icon: (
      <Svg w={14} h={14}>
        <circle cx="6" cy="6" r="3" fill="#ffe37a" stroke="#d88a12" strokeWidth="1.500" />
        <path d="M6 0v2M6 10v2M0 6h2M2 2l1 1M10 2L9 3M2 10l1-1" stroke="#d88a12" />
        <RedX x={8} y={7} />
      </Svg>
    ),
  },
  {
    name: 'Тени',
    icon: (
      <Svg w={14} h={14}>
        <circle cx="6" cy="5" r="4" fill="#d9ebf9" stroke={BLUE} />
        <path d="M2 12c0-3 6-3 8 0" stroke="#556" strokeWidth="2" />
        <RedX x={8} y={7} />
      </Svg>
    ),
  },
  {
    name: 'Обрезать вид',
    icon: (
      <Svg w={14} h={14}>
        <path d="M0 11h3V4h10M3 2v2M6 11V7h5v4" stroke={BLUE} strokeWidth="1.700" />
        <RedX x={8} y={7} />
      </Svg>
    ),
  },
  {
    name: 'Граница обрезки',
    icon: (
      <Svg w={14} h={14}>
        <path d="M0 11h3V4h4M6 11V7h2v5" stroke={BLUE} strokeWidth="1.700" />
        <circle cx="10.500" cy="5" r="2.700" fill="#e8f3fc" stroke={BLUE} />
        <path d="M10.500 8v4" stroke={BLUE} strokeWidth="2" />
      </Svg>
    ),
  },
  {
    name: 'Временная изоляция',
    icon: (
      <Svg w={15} h={12}>
        <path d="M0 3l3 2M3 5c-1 4 3 5 4 2 1-2 0-2 1-2M3 5h4M8 6l3-4 2 1M8 6c0 5 6 3 6 0-1-2-5-1-6 0z" fill="#fff" strokeWidth="1.200" />
      </Svg>
    ),
  },
  {
    name: 'Скрытые элементы',
    icon: (
      <Svg w={8} h={12}>
        <circle cx="4" cy="4" r="2.700" fill="#d7eafa" stroke={BLUE} />
        <path d="M4 7v4" stroke="#556" strokeWidth="1.800" />
      </Svg>
    ),
  },
  {
    name: 'Временные свойства',
    icon: (
      <Svg w={14} h={12}>
        <path d="M1 2h9M1 2v9h5M10 2v3" stroke="#a0a0a0" strokeDasharray="3 1" />
        <path d="M7 6h5v4H7zM9 8l4 3" stroke="#a0a0a0" />
      </Svg>
    ),
  },
  {
    name: 'Аналитическая модель',
    icon: (
      <Svg w={14} h={12}>
        <path d="M1 9V4l3-3h7v6M1 5h8M4 2v8M7 2v8M9 5l3-2" stroke="#a0a0a0" />
      </Svg>
    ),
  },
  {
    name: 'Зависимости',
    icon: (
      <Svg w={15} h={13}>
        <path d="M1 0v12M14 0v5M2 2.500h11M3 1L1.500 2.500 3 4M12 1l1.500 1.500L12 4" strokeWidth="1.200" />
        <rect x="7" y="8" width="7" height="4" fill="#555" />
        <path d="M8.500 8V6h4v2M2 11h4" />
      </Svg>
    ),
  },
];

const DrawingArea = () => (
  <main className="flex min-w-0 flex-1 flex-col bg-white">
    <div className="flex h-[18px] shrink-0 items-stretch bg-[#c9c9c9]">
      <div className="flex w-[112px] items-center bg-white pl-1 font-bold">
        <Svg w={15} h={14}>
          <path d="M1 1h7l3 3v7H1z" fill="#fff" />
          <path d="M5 6h9v7H5z" fill="#fff" />
          <path d="M5 1v3h6M8 6v3M11 3h3v3" />
        </Svg>
        <span className="ml-[5px] flex-1 whitespace-nowrap">Уровень 1</span>
        <button aria-label="Закрыть вид" className="pr-1">
          <Cross />
        </button>
      </div>
      <span className="flex-1" />
      <Tool label="Список вкладок" className="w-5">
        <Svg w={8} h={8}>
          <path d="M0 1.500h8" strokeWidth="1.500" stroke="#222" />
          <path d="M0 3.500h8L4 7.500z" fill="#222" stroke="none" />
        </Svg>
      </Tool>
    </div>
    <div className="flex min-h-0 flex-1">
      <div className="relative min-w-0 flex-1 overflow-hidden">
        <FloorPlan />
        <NavigationBar />
      </div>
      <div className="mr-[2px] ml-px flex w-[14px] flex-col items-center bg-[#f0f0f0] py-1">
        <BoldChevron className="rotate-180" />
        <span className="flex-1" />
        <span className="h-4 w-full bg-[#cdcdcd]" />
        <span className="flex-1" />
        <BoldChevron />
      </div>
    </div>
    <div className="flex h-[15px] shrink-0 items-center bg-[#f0f0f0]">
      <span className="w-[69px] pl-[23px] text-[#222]">1 : 100</span>
      {viewControls.map((item) => (
        <button key={item.name} aria-label={item.name} className="flex w-[18px] justify-center">
          {item.icon}
        </button>
      ))}
      <BoldChevron className="ml-2 rotate-90" />
      <span className="flex-1" />
      <span className="h-[13px] w-[15px] bg-[#cdcdcd]" />
      <span className="flex-1" />
      <BoldChevron className="mr-[7px] -rotate-90" />
      <Svg w={12} h={12}>
        <path d="M9 3h2M9 6h2M9 9h2M6 6h2M6 9h2M3 9h2" stroke="#b0b0b0" strokeWidth="1.500" />
      </Svg>
    </div>
  </main>
);

// ---------- properties ----------

const PropertiesPanel = () => (
  <aside className="flex w-[194px] shrink-0 flex-col border-l-[3px] border-[#d0d0d0] bg-[#eeeeee]">
    <div className="flex h-[18px] shrink-0 items-center justify-between pr-[2px] pl-[3px] text-[#4a4a4a]">
      <h2>Свойства</h2>
      <button aria-label="Закрыть свойства">
        <Cross />
      </button>
    </div>
    <button className="mx-px flex h-[62px] shrink-0 items-center border border-[#d6d6d6] pl-[2px] text-left leading-[14px] text-[#4a4a4a]">
      <span className="size-[58px] shrink-0 border border-[#d0d0d0]" />
      <span className="ml-[3px] flex-1">
        Стиль линейных
        <br />
        размеров
        <br />
        Диагональ - 2,5 мм
        <br />
        Arial
      </span>
      <Caret color="#222" size={7} />
    </button>
    <div className="flex h-[23px] shrink-0 items-center pl-px">
      <Select
        label="Категория"
        value="Нанести размеры"
        className="h-[20px] w-[94px] border-[#adadad] bg-[#e1e1e1] text-[#1a1a1a]"
      />
      <button className="ml-1 flex items-center gap-1 whitespace-nowrap text-[#1a1a1a]">
        <Svg w={15} h={16}>
          <path d="M1 3l2-2h4v6H1zM8 3l2-2h4v5H8zM1 10l2-2h4v6H1z" fill="#fff" />
          <rect x="8" y="7" width="6" height="8" fill="#fff" />
          <path d="M9 9h4" stroke={BLUE} strokeWidth="2" />
          <path d="M9.500 11v3M11 11v3M12.500 11v3" strokeWidth=".7" />
        </Svg>
        Изменить тип
      </button>
    </div>
    <div className="min-h-0 flex-1 bg-white" />
    <div className="flex h-[22px] shrink-0 items-center justify-between pr-[2px] pl-[3px]">
      <a href="#help" className="whitespace-nowrap text-[#1b75d0] underline">
        Справка по свойствам
      </a>
      <button className="h-5 w-[64px] border border-[#bfbfbf] bg-[#cccccc] text-[#8a8a8a]">Применить</button>
    </div>
  </aside>
);

// ---------- status bar ----------

const selectionIcons: { name: string; icon: ReactNode }[] = [
  {
    name: 'Выбор связей',
    icon: (
      <Svg>
        <path d="M1 5a2 2 0 014-1h3v2H5a2 2 0 01-4-1zM5 10l4-2" stroke="#d29512" strokeWidth="1.500" />
        <RedX x={9} y={1} />
        <Pointer x={7} y={5} />
      </Svg>
    ),
  },
  {
    name: 'Выбор подложек',
    icon: (
      <Svg>
        <path d="M5 2h9L10 6H2zM2 7h8M1 12l4-3h4M1 12h8" stroke={BLUE} strokeWidth="1.200" fill="#d6e8f8" />
        <Pointer x={9} y={5} />
      </Svg>
    ),
  },
  {
    name: 'Выбор закрепленных',
    icon: (
      <Svg>
        <path d="M2 2h6v2H7v3h2v3H1V7h2V4H2zM5 10v5" fill="#f3b07a" stroke="#d3541d" strokeWidth="1.200" />
        <RedX x={9} y={1} />
        <Pointer x={9} y={5} />
      </Svg>
    ),
  },
  {
    name: 'Выбор по грани',
    icon: (
      <Svg>
        <path d="M2 4l7-3v10l-7 3z" fill="#bfe0f5" stroke={BLUE} strokeWidth="1.400" />
        <Pointer x={8} y={5} />
      </Svg>
    ),
  },
  {
    name: 'Перетаскивание',
    icon: (
      <Svg>
        <path d="M5 1v8M1 5h8M4 2l1-1 1 1M4 8l1 1 1-1" strokeWidth="1.800" stroke="#222" />
        <RedX x={9} y={1} />
        <Pointer x={9} y={5} />
      </Svg>
    ),
  },
  {
    name: 'Фоновые процессы',
    icon: (
      <Svg>
        <circle cx="8" cy="8" r="4.500" stroke="#a4a4a4" strokeWidth="2.500" strokeDasharray="2.500 1.200" />
      </Svg>
    ),
  },
];

const StatusBar = () => (
  <div className="flex h-[22px] shrink-0 items-center border-t border-[#dedede] bg-[#c9c9c9] text-[#1a1a1a]">
    <span className="w-[200px] shrink-0 overflow-hidden pl-px whitespace-nowrap">
      Выберите объекты, затем нажмите левую
    </span>
    <Tool label="Рабочие наборы" className="w-[27px]">
      <Svg>
        <path d="M1 8l2-2h4v6l-2 2H1zM1 8h4v6M5 8l2-2" fill="#9cc9f0" stroke={BLUE} />
        <path d="M9 6h5v3l-1 5h-3L9 9z" fill="#c9dbe9" />
        <path d="M6 5V2h5v3M8 1v3" stroke="#3d9a3d" strokeWidth="1.600" />
      </Svg>
    </Tool>
    <Select
      label="Рабочий набор"
      value=""
      chevron="opacity-40"
      className="h-4 w-[180px] border-[#e3e3e3] bg-white"
    />
    <Tool label="Только редактируемые" className="ml-1 w-5">
      <Svg w={14} h={14}>
        <path d="M3 1h9l1 3-5 4v1h-3l3-4H2zM1 13l4-4h2v4z" fill="#b5b5b5" stroke="#8d8d8d" />
      </Svg>
    </Tool>
    <span className="w-[26px]">:0</span>
    <Tool label="Варианты" className="w-5">
      <Svg w={15} h={14}>
        <rect x="1" y="1" width="13" height="12" fill="#fff" />
        <path d="M1 2.500h13" strokeWidth="3" />
        <path d="M4 5v6M4 7h2M4 10h2M8 7h4M8 10h4" strokeWidth="1.300" />
      </Svg>
    </Tool>
    <Tool label="Добавить в набор" className="ml-1 w-[19px]">
      <Svg w={14} h={13}>
        <path d="M5 0h9v12H5z" fill="#999" stroke="none" />
        <path d="M1 12h6V8H3V3h3l-2 4 5 2-3 3" stroke="#777" fill="#b9b9b9" />
      </Svg>
    </Tool>
    <Select
      label="Модель"
      value="Главная модель"
      chevron="opacity-40"
      className="ml-1 h-4 w-[180px] border-[#e3e3e3] bg-white text-[#7c7c7c]"
    />
    <span className="flex-1" />
    {selectionIcons.map((item) => (
      <Tool key={item.name} label={item.name} className="w-[23px]">
        {item.icon}
      </Tool>
    ))}
    <button className="flex w-[88px] items-center pl-[3px]">
      <Svg w={14} h={14}>
        <path d="M1 1h12v2L8.500 8v5h-3V8L1 3z" fill="#a5abb3" />
      </Svg>
      :0
    </button>
  </div>
);

// ---------- windows taskbar ----------

const Taskbar = () => (
  <footer className="flex h-[35px] shrink-0 items-stretch bg-[#3c4045] text-white">
    <button aria-label="Пуск" className="flex w-[42px] items-center justify-center bg-[#33373b]">
      <svg width="14" height="14" viewBox="0 0 14 14" fill="#fff" aria-hidden="true">
        <path d="M0 2l6-1v5.500H0zM7 .9L14 0v6.500H7zM0 7.500h6V13l-6-1zM7 7.500h7V14l-7-.9z" />
      </svg>
    </button>
    <label className="flex w-[302px] shrink-0 items-center border border-[#dcdcdc] bg-[#f1f1f1] pl-[9px] text-[#333]">
      <svg width="16" height="16" viewBox="0 0 16 16" fill="none" stroke="#222" strokeWidth="1.200" aria-hidden="true">
        <circle cx="9.500" cy="6" r="4.800" />
        <path d="M6 9.500L1 15" />
      </svg>
      <input
        aria-label="Поиск"
        placeholder="Введите здесь текст для поиска"
        className="ml-[9px] min-w-0 flex-1 bg-transparent text-[12px] outline-none placeholder:text-[#444]"
      />
    </label>
    <button aria-label="Представление задач" className="flex w-[42px] items-center justify-center">
      <svg width="16" height="14" viewBox="0 0 16 14" fill="none" stroke="#fff" strokeWidth="1.200" aria-hidden="true">
        <path d="M1 0v2.500h9V0M1 14v-2.500h9V14M1 4.500h9v5H1zM13.500 0v3M13.500 8v6" />
        <rect x="12.500" y="4.500" width="2" height="2" fill="#fff" />
      </svg>
    </button>
    <button
      aria-label="Edge"
      className="mx-[7px] flex w-[34px] items-center justify-center border-b-2 border-[#6fb1e8] pt-[2px]"
    >
      <svg width="22" height="22" viewBox="0 0 22 22" aria-hidden="true">
        <defs>
          <linearGradient id="edgeTop" x1="0" y1="0" x2="1" y2=".4">
            <stop offset="0" stopColor="#2fa8e0" />
            <stop offset="1" stopColor="#62d84f" />
          </linearGradient>
        </defs>
        <circle cx="11" cy="11" r="10.500" fill="#1463b3" />
        <path
          d="M.5 11C1 4 5 .5 11 .5S21.500 5 21.500 9.500 17 15 14 14c-1.500-.7-.5-1.500-.5-3C13.500 6.500 5 5 .5 11z"
          fill="url(#edgeTop)"
        />
        <path d="M.5 11C3 6 10 6 10.500 9 7 10 7 17 13 19c-3 3.500-12 2-12.500-8z" fill="#1583d8" />
        <path d="M22 13.500c-2 2-5 2-8 1-2-.7-2.500-2-1.500-3.500-2 1-1.500 5 3 6 2 .4 4 0 5-.7z" fill="#3c4045" />
      </svg>
    </button>
    <button
      aria-label="Revit 2022"
      className="flex w-[42px] items-center justify-center border-b-2 border-[#6fb1e8] bg-[#65686c] pt-[2px]"
    >
      <span className="flex size-[21px] items-center justify-center bg-[#dfe8f3]">
        <RevitLogo size={17} />
      </span>
    </button>
    <span className="flex-1" />
    <div className="flex items-center">
      <span className="flex size-[20px] items-center justify-center rounded-full border-2 border-white bg-[#1592dc] text-[14px] leading-none font-bold">
        ?
      </span>
      <Tool label="Скрытые значки" className="ml-[5px] w-[22px]">
        <Svg w={12} h={8}>
          <path d="M1 7l5-5 5 5" stroke="#fff" strokeWidth="1.300" />
        </Svg>
      </Tool>
      <Tool label="Собрание">
        <Svg w={12} h={16}>
          <path d="M2 2.500c2-2 5-2 7 0M2 13.500c2 2 5 2 7 0M2 5h6v6H2zM8 7l2-1v4L8 9" stroke="#fff" strokeWidth="1.200" />
        </Svg>
      </Tool>
      <Tool label="Батарея">
        <Svg w={15} h={12}>
          <rect x="5" y="3" width="8" height="6" fill="#fff" stroke="#fff" />
          <path d="M14 5v2M1.500 1v2M3.500 1v2M0 3.500h5M1 4v1.500h3M2.500 6v3H5" stroke="#fff" strokeWidth="1.300" />
        </Svg>
      </Tool>
      <Tool label="Сеть">
        <Svg w={13} h={12}>
          <path d="M1 11C1 5 5 1 12 1M4 11c0-4 3-7 8-7M7 11c0-2 2-4 5-4" stroke="#ccc" strokeWidth="1.200" />
          <circle cx="11" cy="10.500" r="1.200" fill="#fff" stroke="none" />
        </Svg>
      </Tool>
      <Tool label="Звук" className="w-5">
        <Svg w={15} h={14}>
          <path d="M1 5h2l3-3v10L3 9H1zM8 5c1 1 1 3 0 4M10 3.500c2 2 2 5 0 7M12 2c3 3 3 7 0 10" stroke="#fff" />
        </Svg>
      </Tool>
      <span className="w-8 text-center text-[11px]">РУС</span>
      <time className="w-[58px] text-center leading-4">
        22:30
        <br />
        08.05.2022
      </time>
      <button aria-label="Уведомления" className="flex w-[42px] items-center justify-center pr-1">
        <span className="relative">
          <Svg w={16} h={15}>
            <path d="M1 1h14v10H7l-3 3v-3H1z" fill="#fff" stroke="#fff" />
            <path d="M3 4h10M3 6.500h10M3 9h6" stroke="#3c4045" />
          </Svg>
          <span className="absolute top-[5px] left-2 flex size-[13px] items-center justify-center rounded-full border border-[#999] bg-[#33373b] text-[10px] leading-none">
            1
          </span>
        </span>
      </button>
      <span className="mr-1 h-[35px] w-px bg-[#6a6d71]" />
    </div>
  </footer>
);

const App = () => {
  const [activeTab, setActiveTab] = useState<string>('Аннотации');

  return (
    <div className="flex h-screen min-h-[600px] flex-col overflow-hidden bg-[#eeeeee] font-['Open_Sans',sans-serif] text-[10px] leading-[14px] text-[#333]">
      <TitleBar />
      <RibbonTabs active={activeTab} onSelect={setActiveTab} />
      <Ribbon />
      <OptionsBar />
      <div className="flex min-h-0 flex-1">
        <ProjectBrowser />
        <DrawingArea />
        <PropertiesPanel />
      </div>
      <StatusBar />
      <Taskbar />
    </div>
  );
};

export default App;
